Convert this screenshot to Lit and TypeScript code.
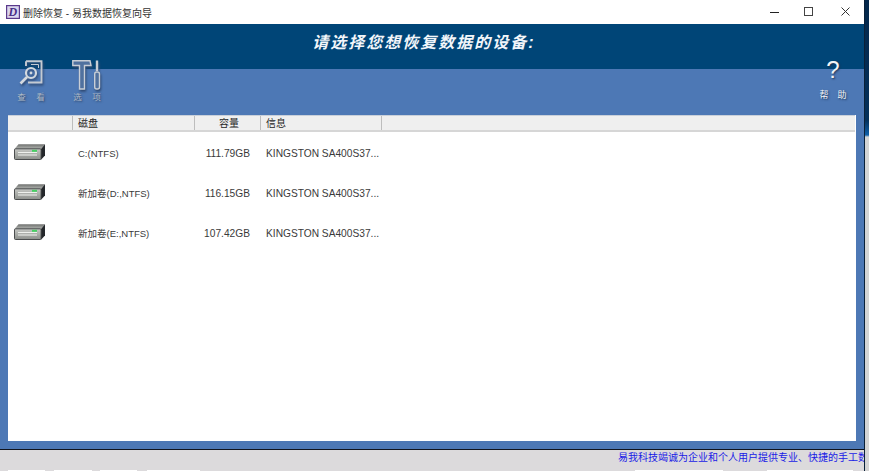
import { LitElement, html, css, svg } from "lit";
import { customElement } from "lit/decorators.js";

const rows = [
  ["C:(NTFS)", "111.79GB"],
  ["新加卷(D:,NTFS)", "116.15GB"],
  ["新加卷(E:,NTFS)", "107.42GB"],
];

const tabs = [
  [8, 37],
  [9, 38],
  [8, 37],
  [10, 53],
  [435, 88],
  [44, 86],
];

const disk = svg`<svg class="disk" width="31" height="16" viewBox="0 0 31 16">
  <defs>
    <linearGradient id="top" x1="0" x2="0" y1="0" y2="1"><stop offset="0" stop-color="#6f716f"/><stop offset="1" stop-color="#b4b6b3"/></linearGradient>
    <linearGradient id="front" x1="0" x2="0" y1="0" y2="1"><stop offset="0" stop-color="#c6c8c4"/><stop offset="1" stop-color="#8d908c"/></linearGradient>
  </defs>
  <path d="M4.5 .3H31L27 5H.5Z" fill="url(#top)"/>
  <path d="M27 5 31 .3V11.5L27 15.7Z" fill="#24272b"/>
  <rect x=".5" y="4.8" width="26.6" height="10.7" rx="1" fill="url(#front)" stroke="#3c3e40" stroke-width=".9"/>
  <path d="M4 8.5H23M4 11H23" stroke="#eef0ec" stroke-width="1"/>
  <rect x="18" y="5.8" width="5" height="2" fill="#45cf62"/>
</svg>`;

const viewIcon = svg`<svg width="24" height="26" viewBox="0 0 24 26" class="tool">
  <path d="M7 1.2H22.5V22.5H9M7 1.2V6" fill="none" stroke="#c4cad2" stroke-width="1.9"/>
  <path d="M12 4.5H19.5V8" fill="none" stroke="#c4cad2" stroke-width="1"/>
  <circle cx="12" cy="13" r="5" fill="none" stroke="#d3d8de" stroke-width="2.2"/>
  <circle cx="12" cy="13" r="1.4" fill="#d3d8de"/>
  <path d="M8 17 1.5 23.5" stroke="#d3d8de" stroke-width="2.6"/>
</svg>`;

const toolIcon = svg`<svg width="30" height="30" viewBox="0 0 30 30" class="tool">
  <path d="M.8 .8H18L19 5.5H12.5V29H7.5V5.5H.8Z" fill="#50719f" stroke="#c8ced6" stroke-width="1.4"/>
  <path d="M25 .5V11" stroke="#c8ced6" stroke-width="2.4"/>
  <rect x="22.7" y="12" width="4.8" height="17" rx="2" fill="#50719f" stroke="#c8ced6" stroke-width="1.4"/>
</svg>`;

const logo = svg`<svg width="14" height="14" viewBox="0 0 14 14">
  <rect x=".6" y=".6" width="12.8" height="12.8" fill="#dcd8ee" stroke="#5b3a8c" stroke-width="1.2"/>
  <text x="6.8" y="11" text-anchor="middle" font-family="Liberation Serif, serif" font-style="italic" font-weight="700" font-size="12" fill="#4a2f86">D</text>
</svg>`;

@customElement("app-root")
export class AppRoot extends LitElement {
  static styles = css`
    :host {
      display: flex;
      width: 869px;
      height: 471px;
      overflow: hidden;
      font-family: "Liberation Sans", "Noto Sans CJK SC", sans-serif;
      background: #0b2f57;
    }
    .window {
      width: 864px;
      flex: none;
      display: flex;
      flex-direction: column;
    }
    .strip {
      flex: 1;
      background: linear-gradient(#04284c 0, #04305a 120px, #0f5fa8 135px, #d4d4d4 137px, #d4d4d4 471px);
      border-left: 1px solid #0a2038;
    }
    .titlebar {
      height: 24px;
      flex: none;
      background: #fff;
      display: flex;
      align-items: center;
      padding-left: 6px;
      color: #333;
      font-size: 10px;
    }
    .titlebar svg { display: block; }
    .titlebar .name { margin-left: 3px; white-space: pre; }
    .controls { margin-left: auto; display: flex; }
    .controls div { width: 37px; height: 24px; display: flex; align-items: center; justify-content: center; }
    .main {
      height: 425px;
      flex: none;
      display: flex;
      flex-direction: column;
      background: linear-gradient(#004577 45px, #4d78b5 45px);
    }
    .heading {
      height: 33px;
      flex: none;
      display: flex;
      align-items: center;
      justify-content: center;
      padding-right: 16px;
      color: #f2f6fa;
      font-size: 16px;
      font-weight: 700;
      font-style: italic;
      letter-spacing: 2px;
    }
    .toolbar {
      height: 58px;
      flex: none;
      box-sizing: border-box;
      display: flex;
      padding: 3px 16px 0;
    }
    .tbtn {
      display: flex;
      flex-direction: column;
      align-items: center;
      width: 30px;
      height: 46px;
      font-size: 8.5px;
      color: #aeb9c6;
      text-shadow: 1px 1px 2px #2c4468;
    }
    .tbtn .ico { height: 32px; display: flex; align-items: flex-start; justify-content: center; }
    .tbtn .lbl { white-space: nowrap; letter-spacing: 10.5px; margin-left: 10.5px; line-height: 11px; }
    .tbtn.view { margin-right: 26px; }
    .tbtn.help { margin-left: auto; color: #f2f4f6; font-size: 9px; text-shadow: 1px 1px 2px #1d3354; }
    .tbtn.help .ico { font-size: 24px; line-height: 20px; height: 30px; text-shadow: 1px 1px 2px #1d3354; }
    .tbtn.help .lbl { letter-spacing: 9px; margin-left: 9px; }
    .tool { display: block; filter: drop-shadow(1px 2px 1px #2f4a73); }
    .table {
      margin: 0 8px;
      height: 326px;
      flex: none;
      background: #fff;
      color: #3a3a3a;
      font-size: 9.5px;
      overflow: hidden;
    }
    .thead {
      display: flex;
      height: 17px;
      box-sizing: border-box;
      background: #efefef;
      border-bottom: 2px solid #d6d6d6;
      border-top: 1px solid #c9d0da;
      margin-right: 1px;
      color: #262626;
    }
    .thead div {
      flex: none;
      box-sizing: border-box;
      border-right: 1px solid #bdbdbd;
      line-height: 15px;
      font-size: 10px;
    }
    .thead .c2 { padding-right: 21px; }
    .c0 { width: 65px; }
    .c1 { width: 122px; padding-left: 5px; }
    .c2 { width: 66px; padding-right: 11px; text-align: right; }
    .c3 { width: 121px; padding-left: 5px; }
    .tbody { padding-top: 1px; }
    .row {
      display: flex;
      align-items: center;
      height: 40px;
    }
    .row .c0 { padding-left: 6px; box-sizing: border-box; }
    .row .c0 .disk { display: block; margin-top: -2px; }
    .row .c1, .row .c2, .row .c3 { box-sizing: border-box; white-space: nowrap; }
    .row .c2 { font-size: 10.2px; }
    .row .c3 { width: auto; font-size: 10.2px; }
    .footer {
      flex: 1;
      background: #dcdadc;
      border-top: 1px solid #10131c;
      display: flex;
      flex-direction: column;
      overflow: hidden;
    }
    .ticker {
      height: 15px;
      padding-left: 618px;
      color: #1a1ae6;
      font-size: 10px;
      line-height: 15px;
      white-space: nowrap;
      overflow: hidden;
    }
    .tabs { display: flex; margin-top: 5px; height: 1px; }
    .tabs span { background: #fff; height: 1px; flex: none; }
  `;

  render() {
    return html`
      <div class="window">
        <div class="titlebar">
          ${logo}
          <span class="name">删除恢复 - 易我数据恢复向导</span>
          <div class="controls">
            <div><svg width="14" height="10" viewBox="0 0 14 10"><path d="M5 5.5H14" stroke="#222" stroke-width="1"/></svg></div>
            <div><svg width="10" height="10" viewBox="0 0 10 10"><rect x=".5" y=".5" width="8" height="8" fill="none" stroke="#444"/></svg></div>
            <div><svg width="10" height="10" viewBox="0 0 10 10"><path d="M.5 .5 8.5 8.5M8.5 .5 .5 8.5" stroke="#333" stroke-width="1"/></svg></div>
          </div>
        </div>
        <div class="main">
          <div class="heading">请选择您想恢复数据的设备:</div>
          <div class="toolbar">
            <div class="tbtn view"><div class="ico">${viewIcon}</div><div class="lbl">查看</div></div>
            <div class="tbtn"><div class="ico">${toolIcon}</div><div class="lbl">选项</div></div>
            <div class="tbtn help"><div class="ico">?</div><div class="lbl">帮助</div></div>
          </div>
          <div class="table">
            <div class="thead">
              <div class="c0"></div>
              <div class="c1">磁盘</div>
              <div class="c2">容量</div>
              <div class="c3">信息</div>
            </div>
            <div class="tbody">
              ${rows.map(
                (r) => html`<div class="row">
                  <div class="c0">${disk}</div>
                  <div class="c1">${r[0]}</div>
                  <div class="c2">${r[1]}</div>
                  <div class="c3">KINGSTON SA400S37...</div>
                </div>`
              )}
            </div>
          </div>
        </div>
        <div class="footer">
          <div class="ticker">易我科技竭诚为企业和个人用户提供专业、快捷的手工数据</div>
          <div class="tabs">
            ${tabs.map((t) => html`<span style="margin-left:${t[0]}px;width:${t[1]}px"></span>`)}
          </div>
        </div>
      </div>
      <div class="strip"></div>
    `;
  }
}
